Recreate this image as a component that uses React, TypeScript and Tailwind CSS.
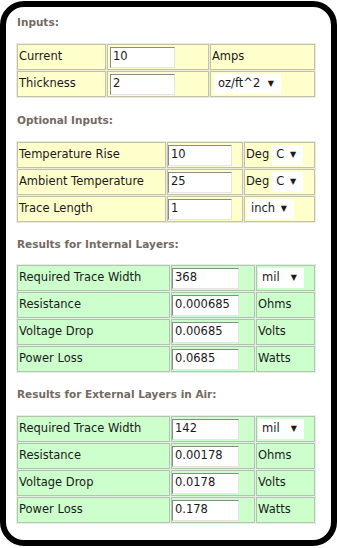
import React from "react";

const FONT = { fontFamily: '"DejaVu Sans", Verdana, Tahoma, sans-serif' };

function Input({ value, w = "w-[65px]" }: { value: string; w?: string }) {
  return (
    <div
      className={`${w} h-[21px] bg-white border border-t-[#8a8a8a] border-l-[#8a8a8a] border-r-[#e4e4e4] border-b-[#e4e4e4] pl-[2px] flex items-center text-[11.5px] text-[#1a1a1a]`}
    >
      {value}
    </div>
  );
}

function Sel({ text, w }: { text: string; w: string }) {
  return (
    <div className={`${w} h-[20px] bg-white flex items-center pl-[4px] text-[11.5px] text-[#1a1a1a]`}>
      <span>{text}</span>
      <span className="ml-auto mr-[7px] text-[8px]">▼</span>
    </div>
  );
}

function Heading({ children, className = "" }: { children: React.ReactNode; className?: string }) {
  return <div className={`text-[10.5px] leading-[16px] font-bold text-[#736a62] pl-[1px] ${className}`}>{children}</div>;
}

type Row = { label: string; input: React.ReactNode; unit: React.ReactNode };

function Table({ rows, cols, bg, line, gap, inPad }: { rows: Row[]; cols: string; bg: string; line: string; gap: string; inPad: string }) {
  return (
    <div className={`grid ${cols} gap-px p-px ${gap} w-[300px]`}>
      {rows.map((r, i) => (
        <React.Fragment key={i}>
          <div className={`h-[26px] ${bg} border ${line} flex items-center pl-px text-[11.5px] text-[#1a1a1a]`}>{r.label}</div>
          <div className={`h-[26px] ${bg} border ${line} flex items-center ${inPad}`}>{r.input}</div>
          <div className={`h-[26px] ${bg} border ${line} flex items-center pl-px text-[11.5px] text-[#1a1a1a]`}>{r.unit}</div>
        </React.Fragment>
      ))}
    </div>
  );
}

function DegC() {
  return (
    <>
      <span>Deg</span>
      <div className="ml-[3px]">
        <Sel text="C" w="w-[31px]" />
      </div>
    </>
  );
}

export default function App() {
  const yellow = { bg: "bg-[#ffffcc]", line: "border-[#c2c2aa]", gap: "bg-[#ececdc]" };
  const green = { bg: "bg-[#ccffcc]", line: "border-[#b0c4b0]", gap: "bg-[#e4f0e4]" };
  return (
    <div className="w-[337px] h-[548px] bg-white" style={FONT}>
      <div className="w-[337px] h-[545px] mt-px border-[6px] border-black rounded-[24px] pl-[10px] pt-[7px] flex flex-col">
        <Heading>Inputs:</Heading>
        <div className="mt-[13px]">
          <Table
            {...yellow}
            inPad="pl-[2px]"
            cols="grid-cols-[89px_102px_105px]"
            rows={[
              { label: "Current", input: <Input value="10" />, unit: "Amps" },
              { label: "Thickness", input: <Input value="2" />, unit: <div className="ml-[2px]"><Sel text="oz/ft^2" w="w-[67px]" /></div> },
            ]}
          />
        </div>
        <Heading className="mt-[14px]">Optional Inputs:</Heading>
        <div className="mt-[13px]">
          <Table
            {...yellow}
            inPad="pl-0"
            cols="grid-cols-[149px_76px_71px]"
            rows={[
              { label: "Temperature Rise", input: <Input value="10" w="w-[64px]" />, unit: <DegC /> },
              { label: "Ambient Temperature", input: <Input value="25" w="w-[64px]" />, unit: <DegC /> },
              { label: "Trace Length", input: <Input value="1" w="w-[64px]" />, unit: <div className="ml-[1px]"><Sel text="inch" w="w-[47px]" /></div> },
            ]}
          />
        </div>
        <Heading className="mt-[13px]">Results for Internal Layers:</Heading>
        <div className="mt-[12px]">
          <Table
            {...green}
            inPad="pl-0"
            cols="grid-cols-[153px_84px_59px]"
            rows={[
              { label: "Required Trace Width", input: <Input value="368" w="w-[67px]" />, unit: <Sel text="mil" w="w-[46px]" /> },
              { label: "Resistance", input: <Input value="0.000685" w="w-[67px]" />, unit: "Ohms" },
              { label: "Voltage Drop", input: <Input value="0.00685" w="w-[67px]" />, unit: "Volts" },
              { label: "Power Loss", input: <Input value="0.0685" w="w-[67px]" />, unit: "Watts" },
            ]}
          />
        </div>
        <Heading className="mt-[13px]">Results for External Layers in Air:</Heading>
        <div className="mt-[13px]">
          <Table
            {...green}
            inPad="pl-0"
            cols="grid-cols-[153px_84px_59px]"
            rows={[
              { label: "Required Trace Width", input: <Input value="142" w="w-[67px]" />, unit: <Sel text="mil" w="w-[46px]" /> },
              { label: "Resistance", input: <Input value="0.00178" w="w-[67px]" />, unit: "Ohms" },
              { label: "Voltage Drop", input: <Input value="0.0178" w="w-[67px]" />, unit: "Volts" },
              { label: "Power Loss", input: <Input value="0.178" w="w-[67px]" />, unit: "Watts" },
            ]}
          />
        </div>
      </div>
    </div>
  );
}
